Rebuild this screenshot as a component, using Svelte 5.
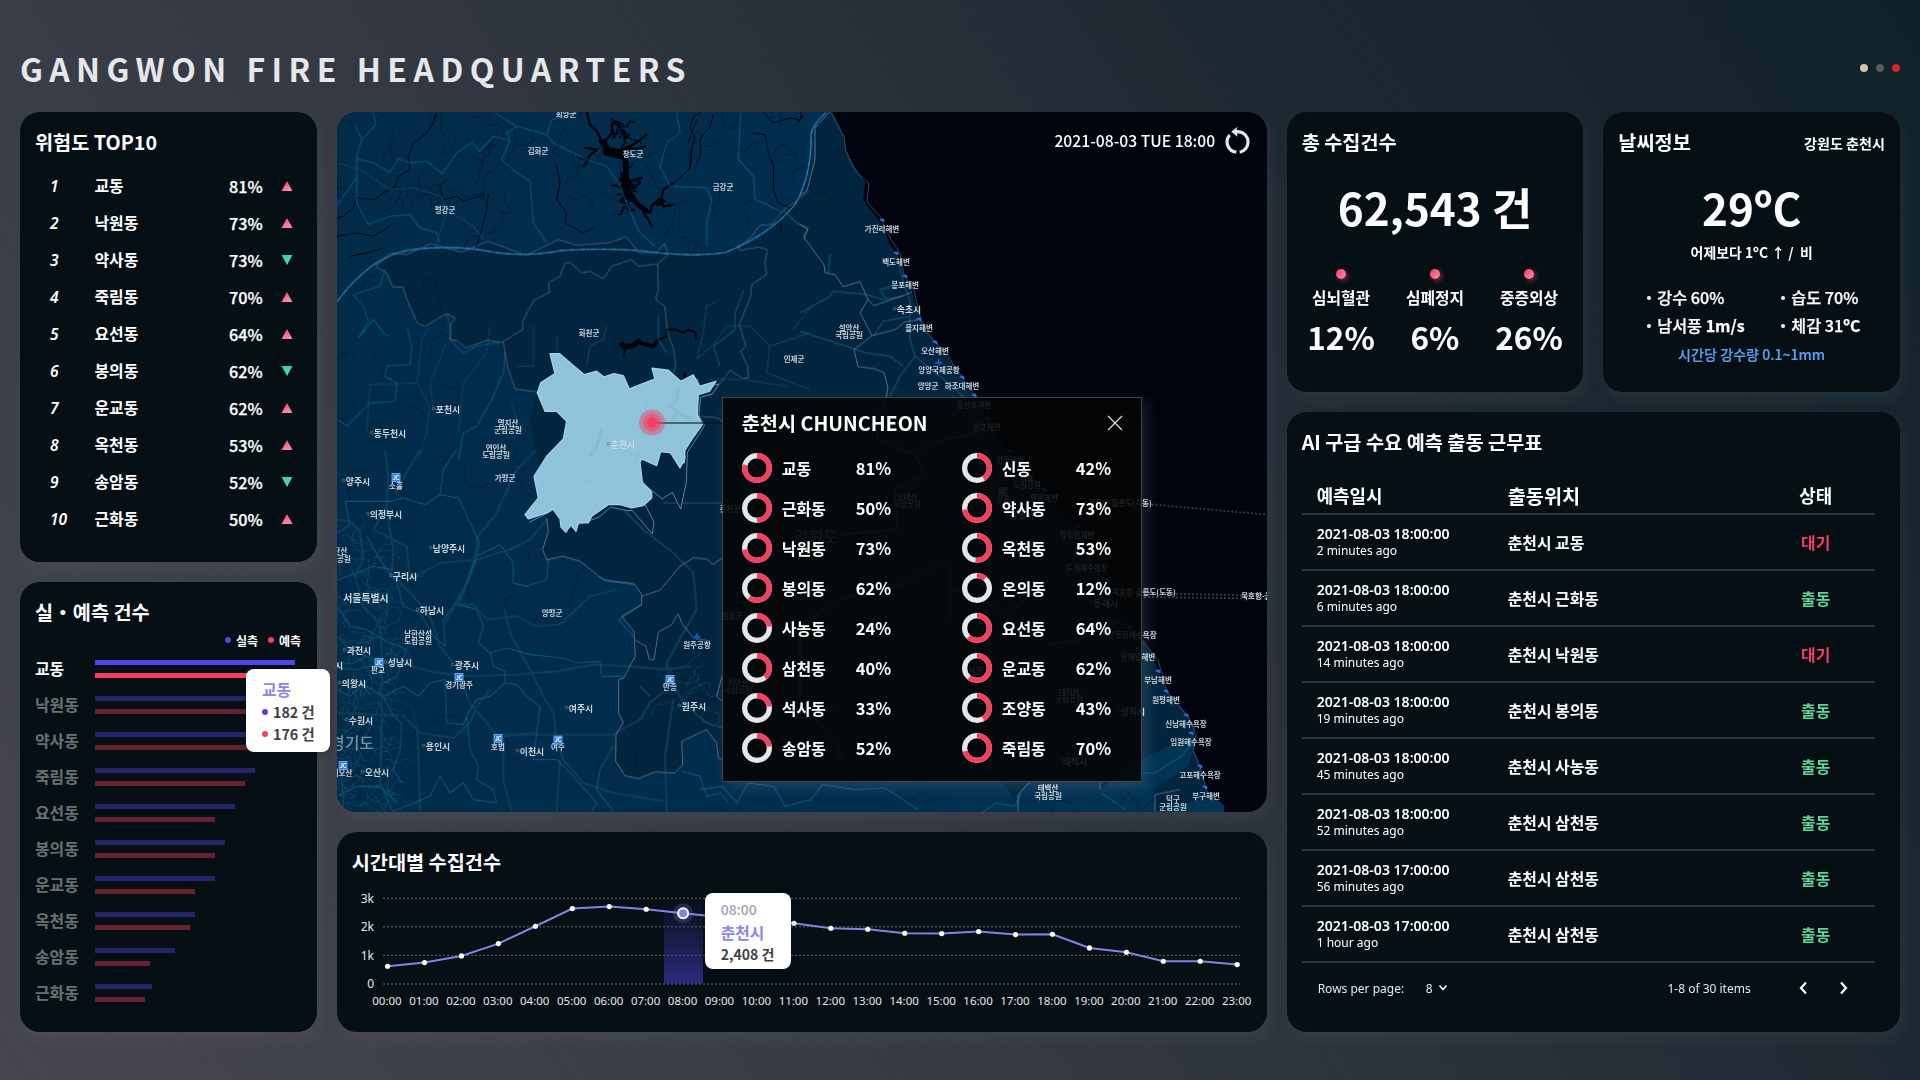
<script>
  const ranks = [
    ['교동', 81, 1], ['낙원동', 73, 1], ['약사동', 73, 0], ['죽림동', 70, 1], ['요선동', 64, 1],
    ['봉의동', 62, 0], ['운교동', 62, 1], ['옥천동', 53, 1], ['송암동', 52, 0], ['근화동', 50, 1]
  ];
  const bars = [
    ['교동', 200, 190], ['낙원동', 180, 170], ['약사동', 175, 160], ['죽림동', 160, 150], ['요선동', 140, 120],
    ['봉의동', 130, 120], ['운교동', 120, 100], ['옥천동', 100, 95], ['송암동', 80, 55], ['근화동', 57, 50]
  ];
  const donuts = [
    ['교동', 81, 79], ['신동', 42, 41], ['근화동', 50, 50], ['약사동', 73, 73], ['낙원동', 73, 73], ['옥천동', 53, 52],
    ['봉의동', 62, 61], ['온의동', 12, 11], ['사농동', 24, 23], ['요선동', 64, 62], ['삼천동', 40, 39], ['운교동', 62, 61],
    ['석사동', 33, 23], ['조양동', 43, 42], ['송암동', 52, 23], ['죽림동', 70, 71]
  ];
  const rows = [
    ['18', '2 minutes', '교동', 0], ['18', '6 minutes', '근화동', 1], ['18', '14 minutes', '낙원동', 0],
    ['18', '19 minutes', '봉의동', 1], ['18', '45 minutes', '사농동', 1], ['18', '52 minutes', '삼천동', 1],
    ['17', '56 minutes', '삼천동', 1], ['17', '1 hour', '삼천동', 1]
  ];
  const causes = [['심뇌혈관', 12], ['심폐정지', 6], ['중증외상', 26]];
  const hours = Array.from({ length: 24 }, (_, i) => String(i).padStart(2, '0') + ':00');
  const levels = [440, 429, 409, 372, 320, 267, 261, 269, 281, 292, 301, 311, 326, 329, 341, 342, 336, 345, 344, 385, 398, 425, 425, 435];
  const points = levels.map((v, i) => [50.6 + i * 36.94, v / 3 - 12.4]);
  const line = points.map((p) => p.join(',')).join(' ');

  // Small place names: [text, x, y]
  const places = [
    ['회양군', 566, 117], ['김화군', 538, 154], ['창도군', 633, 157], ['금강군', 723, 190], ['평강군', 445, 213],
    ['화천군', 589, 336], ['인제군', 794, 362], ['명지산', 508, 426], ['군립공원', 508, 433], ['연인산', 496, 451],
    ['도립공원', 496, 458], ['소흘', 396, 489], ['가평군', 505, 481], ['북한산', 337, 554], ['국립공원', 337, 562],
    ['양평군', 552, 616], ['남한산성', 418, 637], ['도립공원', 418, 644], ['판교', 378, 673], ['경기광주', 459, 688],
    ['호법', 498, 750], ['여주', 558, 750], ['서오산', 342, 776], ['원주공항', 697, 648], ['만종', 670, 690],
    ['가진리해변', 882, 232], ['백도해변', 896, 265], ['봉포해변', 905, 288], ['을지해변', 919, 331], ['설악산', 849, 331],
    ['국립공원', 849, 338], ['오산해변', 935, 354], ['양양국제공항', 939, 373], ['양양군', 928, 389], ['하조대해변', 962, 389],
    ['동산포해변', 974, 408], ['원포해변', 987, 430], ['연곡해변', 1010, 463], ['경포', 1027, 481], ['도립공원', 1027, 488],
    ['안목해변', 1044, 501], ['강릉', 1003, 502], ['정동진해변', 1077, 538], ['도직해수욕장', 1087, 571], ['오대산', 907, 500],
    ['국립공원', 907, 507], ['홍천군', 730, 512], ['횡성군', 732, 619], ['치악산', 738, 686], ['국립공원', 738, 693],
    ['정선군', 972, 674], ['대이리', 1069, 695], ['군립공원', 1069, 702], ['작은후진해수욕장', 1129, 638],
    ['한재밑해변', 1138, 660], ['부남해변', 1158, 683], ['원평해변', 1166, 703], ['신남해수욕장', 1186, 727],
    ['임원해수욕장', 1191, 745], ['고포해수욕장', 1200, 778], ['부구해변', 1206, 799], ['덕구', 1173, 802],
    ['군립공원', 1173, 810], ['태백산', 1048, 791], ['국립공원', 1048, 799],
    ['묵호항-울릉도(도동)', 1144, 595], ['묵호항-울릉도(도동)', 1273, 599], ['강릉항-울릉도(저동)', 1120, 506]
  ];
  const cities = [
    ['포천시', 448, 413], ['동두천시', 390, 437], ['춘천시', 623, 448], ['양주시', 358, 485], ['의정부시', 386, 518],
    ['남양주시', 449, 552], ['구리시', 405, 580], ['하남시', 432, 614], ['과천시', 359, 654], ['성남시', 400, 666],
    ['광주시', 467, 669], ['의왕시', 354, 687], ['여주시', 581, 712], ['수원시', 361, 724], ['용인시', 438, 750],
    ['이천시', 532, 755], ['오산시', 377, 776], ['원주시', 694, 710], ['속초시', 909, 313], ['강릉시', 1022, 519],
    ['동해시', 1106, 607], ['삼척시', 1133, 715], ['태백시', 1075, 765], ['안산시', 331, 669]
  ];
  const junctions = [[396, 478], [379, 663], [459, 678], [498, 739], [558, 740.5], [343, 766], [670, 680], [1003, 492]];
  const beaches = [
    [882, 221], [896, 254], [905, 277], [919, 320], [935, 343], [962, 378], [974, 396], [987, 419], [1010, 452],
    [1044, 490], [1077, 527], [1087, 561], [1107, 581], [1129, 627], [1138, 649], [1158, 672], [1166, 692],
    [1186, 716], [1191, 734], [1200, 767], [1205, 788]
  ];

  // Repeatable noise for minor streams and local roads
  let seed = 11;
  const rnd = () => ((seed = (seed * 16807) % 2147483647) / 2147483647);
  function wander(n, x0, y0, w, h, steps, len) {
    const out = [];
    for (let i = 0; i < n; i++) {
      let x = x0 + rnd() * w, y = y0 + rnd() * h, a = rnd() * 6.28;
      let d = `M${x.toFixed(1)} ${y.toFixed(1)}`;
      for (let k = 0; k < steps; k++) {
        a += (rnd() - 0.5) * 1.9;
        x += Math.cos(a) * len;
        y += Math.sin(a) * len;
        d += `L${x.toFixed(1)} ${y.toFixed(1)}`;
      }
      out.push(d);
    }
    return out.join('');
  }
  const streams = wander(60, 337, 112, 480, 150, 16, 2.4) + wander(14, 337, 260, 120, 150, 10, 3);
  const tracks = wander(50, 337, 400, 900, 410, 20, 5);
  const seoul = wander(130, 337, 540, 62, 270, 10, 3.5) + wander(12, 670, 675, 40, 40, 8, 4);
  const creeks = wander(44, 337, 460, 880, 350, 26, 3);
  const shore = wander(22, 616, 124, 18, 18, 4, 2.5) + wander(34, 622, 165, 11, 46, 4, 2.5);
</script>

<div class="page">
  <header>
    <h1>GANGWON FIRE HEADQUARTERS</h1>
    <div class="dots"><i class="sand"></i><i class="gray"></i><i class="crimson"></i></div>
  </header>

  <main>
    <div class="col left">
      <section class="card">
        <h2>위험도 TOP10</h2>
        <ol class="ranks">
          {#each ranks as [name, pct, up], i}
            <li>
              <em>{i + 1}</em><span>{name}</span><b>{pct}%</b>
              <svg width="12" height="10" viewBox="0 0 12 10">
                {#if up}<path d="M6 0 11.5 10H.5Z" fill="url(#rise)" />{:else}<path d="M.5 0h11L6 10Z" fill="url(#fall)" />{/if}
              </svg>
            </li>
          {/each}
        </ol>
      </section>

      <section class="card compare">
        <h2>실・예측 건수</h2>
        <div class="legend"><i class="blue"></i>실측<i class="red"></i>예측</div>
        {#each bars as [name, real, guess], i}
          <div class="barrow" class:dim={i > 0}>
            <span>{name}</span>
            <div class="pair">
              <div class="bar blue" style="width:{real}px"></div>
              <div class="bar red" style="width:{guess}px"></div>
            </div>
          </div>
        {/each}
        <div class="tip tip-bars">
          <strong>교동</strong>
          <p><i class="blue"></i>182 건</p>
          <p><i class="red"></i>176 건</p>
        </div>
      </section>
    </div>

    <div class="col middle">
      <section class="map">
        <svg class="terrain" viewBox="337 112.4 930 700" width="930" height="700">
          <defs>
            <linearGradient id="rise" x1="0" y1="0" x2="0.4" y2="1"><stop offset="0" stop-color="#f43f5e" /><stop offset="1" stop-color="#f989a8" /></linearGradient>
            <linearGradient id="fall" x1="0" y1="0" x2="0.6" y2="1"><stop offset="0" stop-color="#34d399" /><stop offset="1" stop-color="#4fdcab" /></linearGradient>
            <clipPath id="land">
              <path id="coast" d="M330 105H830L832 112 843 135 846 150 853 165 865 183 863 200 870 210 882 226 890 245 898 258 904 277 912 292 918 312 926 330 940 348 957 370 973 395 987 417 1005 450 1030 475 1050 500 1075 528 1090 560 1108 582 1112 602 1130 626 1150 652 1158 672 1167 692 1185 712 1195 728 1193 750 1200 765 1206 790 1224 806V820H330Z" />
            </clipPath>
            <linearGradient id="ground" x1="0" x2="1"><stop offset="0" stop-color="#012b49" /><stop offset=".6" stop-color="#012e4f" /><stop offset="1" stop-color="#013555" /></linearGradient>
          </defs>
          <rect x="330" y="105" width="945" height="715" fill="#01030f" />
          <g clip-path="url(#land)">
            <rect x="330" y="105" width="945" height="715" fill="url(#ground)" />
            <path fill="#01253f" d="M376 267 391 253 407 255 431 244 462 253 488 242 527 256 558 240 577 246 608 243 626 237 639 253 665 252 720 252 738 246 760 240 783 211 800 193 808 180 816 160 815 130 830 112 H1000 L1250 800 H1200 L1155 812 1153 790 1190 765 1195 735 1140 760 1100 790 1098 782 1030 782 1018 795 1015 802 1000 780 727 782 727 760 718 758 715 743 707 730 682 742 683 765 675 773 655 772 638 779 625 776 616 762 616 735 623 723 619 713 619 680 623 679 635 657 634 632 622 617 642 605 642 595 635 585 603 580 580 562 563 557 547 560 543 550 548 532 547 518 530 420 537 392 514 389 506 367 503 343 487 341 466 348 458 342 450 340 450 327 455 318 447 314 425 327 417 323 403 287 393 287 387 273Z" />
            <path d={streams} fill="none" stroke="#021525" stroke-width=".9" opacity=".65" />
            <path d={tracks} fill="none" stroke="#0b3246" stroke-width="1.2" opacity=".4" />
            <path d={creeks} fill="none" stroke="#021a2d" stroke-width=".8" opacity=".7" />
            <path d={seoul} fill="none" stroke="#146078" stroke-width="1" opacity=".4" />

            <!-- lakes and rivers -->
            <path d={shore} fill="none" stroke="#00030a" stroke-width="1.3" />
            <g transform="translate(330 100) scale(.33333)" fill="none" stroke="#00030a" stroke-linecap="round" stroke-linejoin="round">
              <path stroke-width="7" d="M770 36 780 75 800 95 815 125 832 150M760 200 775 180 750 175M775 172 800 150 765 145M838 150 825 125 848 100 845 72M860 155 900 140 925 125 950 105M910 150 945 140M880 170 890 230 880 260 848 258M940 340 955 360 965 380M930 315 960 340 965 320 985 300 1000 320 1030 315M990 310 1000 270 1030 250M895 245 935 235M900 270 930 250" />
              <path stroke-width="28" d="M832 155 875 165" /><path stroke-width="17" d="M815 125 840 155M885 170 888 220 890 260M872 160 900 145" />
              <path stroke-width="24" d="M885 240 888 275 905 295" /><path stroke-width="15" d="M905 295 930 320 950 335M880 300 890 285M985 312 998 305" />
              <path stroke-width="3" d="M1030 250 1060 225 1080 205 1085 150 1095 110 1080 85 1090 50 1110 40M1100 190 1112 170 1110 120 1140 80 1150 45M1300 40 1330 70 1380 55 1412 62 1412 38M1270 100 1305 105 1315 160 1330 200 1330 270 1345 310 1380 325M320 40 310 70 290 100 250 130 235 170 240 210 205 230 195 262 160 280 135 300 80 295 70 325 40 350 22 355M1100 60 1085 100 1075 130M680 200 690 250 680 300 710 340 705 370 760 400 790 385M475 285 470 330 455 390 440 440M340 300 380 290 400 305 465 285M340 300 330 260 350 240M22 410 80 400 130 410 180 380M60 470 110 460 160 445" />
              <path stroke-width="5" d="M1085 150 1080 205M1405 65 1418 50" />
              <path stroke-width="16" d="M876 735 885 742 910 738 925 725" /><path stroke-width="12" d="M935 732 970 740 985 720" /><path stroke-width="6" d="M925 730 940 735M985 720 1012 710 1008 690 1040 690 1060 700 1075 690 1095 698 1100 718M885 745 882 770M1065 820 1062 840" />
            </g>

            <!-- roads -->
            <g fill="none" stroke-linejoin="round" stroke="#0f4760" stroke-width="7" opacity=".65" transform="translate(330 450) scale(.33333)">
              <path d="M22 210 60 215 90 245 100 330 75 380 100 470 150 520 155 600 155 850 150 1000 190 1090M165 0 175 80 170 180 190 300 185 370 240 390 330 340 440 330 540 300 600 270 650 210M170 170 130 240 190 270 230 290 240 380M440 330 400 430 345 520M270 0 235 60 195 130M22 790 130 795 220 798 270 850 370 865 420 820 440 770 480 720M22 655 80 660 150 640 230 645 300 665 400 680 560 675 680 665 790 645 900 650 1010 660 1080 650M390 690 420 760 500 855 850 855 930 810 960 760 1010 720M525 480 540 550 610 680 640 740 670 790 680 870 700 930 760 1000 850 1030 1000 1055M520 860 520 990 545 1085M620 0 560 60 500 190 445 260 430 340 400 430 385 465 430 465 470 510 560 500 620 530 690 525 780 440 860 420M680 190 780 170 880 160M1000 160 1180 160M880 180 940 240 1030 310 1090 370 1100 480 1060 550 1010 640 1020 690 1060 760 1130 820 1180 835M930 710 960 740M180 370 250 440 300 500 330 590 370 640M520 860 620 850M35 960 40 1085M260 830 265 900 270 1085M690 930 680 1085M1030 750 1005 920 1010 1085" />
            </g>
            <g fill="none" stroke-linejoin="round" stroke="#11405a" stroke-width="6" opacity=".6" transform="translate(330 100) scale(.33333)">
              <path d="M25 190 90 210 180 270 250 265 335 290 350 330 430 380 460 420M350 340 320 430M300 680 275 720 262 850 120 855 110 1000M262 850 300 920 290 1000 265 1080M350 730 300 850 310 930M480 680 470 760 400 850 385 1000M540 900 560 960 590 1000M610 680 610 800 560 800M680 710 680 790M830 680 820 720 780 740 770 800M1160 605 1130 620 1120 700 1100 780 1150 735 1190 680 1260 680 1320 740 1440 700M1320 740 1310 820 1440 870M1130 840 1240 840 1370 860M1440 625 1390 690" />
            </g>
            <g fill="none" stroke-linejoin="round" stroke="#0f4a66" stroke-width="6" opacity=".75" transform="translate(800 100) scale(.33333)">
              <path d="M0 640 90 590 100 575 200 585 250 600 310 590M0 695 140 740 200 760 270 770 310 800M245 390 285 430 295 480 310 550 330 600 330 720 345 770 420 830 500 900M345 770 300 830 270 890M330 650 250 665 220 710M290 560 240 570 260 600M90 465 85 520" />
            </g>

            <!-- district outlines in cyan -->
            <g fill="none" stroke="#0f5c83" stroke-width="3.4" stroke-linejoin="round" opacity=".85">
              <g transform="translate(330 100) scale(.33333)">
                <path d="M75 75 95 120 80 170 80 235 22 315M130 40 137 75 95 120M80 178 130 190 180 217 205 178 240 190 290 185 337 222 380 160 425 128 448 155 490 110 540 122 515 180 560 220 600 245 610 370 650 430M540 122 530 100 560 80 495 40M560 80 650 105 665 60 740 40M650 105 670 130 720 155 770 180 830 200 865 250 890 310 915 370 930 400 975 440M80 235 80 310 115 375 180 350 240 345 270 385 320 400 330 430M1040 40 1050 100 1010 130 990 200 1020 260 1130 265 1145 300 1130 370 1130 440M1232 40 1225 180 1270 230 1275 300 1320 320 1360 340M165 510 150 560 70 585 100 620 115 665 85 715 130 660 160 700 175 710M232 685 245 740 240 795 170 800 165 830 200 850 195 905 120 910 50 980 22 960M525 760 520 820 485 900 440 980 400 1000 385 1080M350 645 365 690 360 720 400 760 440 740 510 728M1240 575 1215 640 1215 690 1150 740 1170 800M985 650 985 720 1010 760" />
              </g>
              <g transform="translate(330 450) scale(.33333)">
                <path d="M380 0 340 60 330 135 285 165 220 145 180 155 45 155 60 225 22 250M330 135 385 145 430 240 448 280 440 320 510 285 550 340 550 400 590 410 650 390 655 330M440 320 410 400 370 470 340 510 345 590 310 560 270 490 220 470 200 400M385 465 440 480 460 530 445 580 480 610 530 595 600 615 700 625 740 640 810 635 815 680 880 680M480 610 490 650 525 665 525 700 560 705 590 740 630 770 620 850 610 930 680 930 730 980 800 1060 785 1085M525 700 480 740 440 750 410 800 420 900 445 950 440 990 490 1020 500 1060 430 1050 400 1000 360 1030 330 980 300 1040 240 1065 190 1085M345 690 350 820 400 825 415 790M345 690 300 700 265 740 220 710 160 740 100 705 60 740 22 720M160 740 190 800 215 820 210 900 190 960 215 1000M22 470 60 530 110 540 160 570 230 600 200 680 160 700M22 560 60 600 110 620M850 890 810 960 800 1020 850 1085M935 465 865 510 910 560M660 330 650 330M805 380 830 395 915 400M1055 965 1110 980 1130 1040 1170 1030 1195 1060M22 640 70 640 110 620 150 650M22 390 80 370 130 350 190 360M22 1040 80 1010 150 1010 200 1060M110 260 150 330 200 400" />
              </g>
              <g transform="translate(700 380) scale(.37 .33333)">
                <path d="M0 1230 60 1220 100 1270 130 1210 200 1220 230 1280 300 1260 330 1215 420 1230 500 1225 590 1290M760 1300 800 1270 850 1280 870 1240M1085 1240 1150 1290M1340 1080 1300 1130 1230 1180 1160 1180" />
              </g>
            </g>

            <!-- provincial borders -->
            <g fill="none" stroke="#7d93a8" stroke-width="2.6" stroke-linejoin="round" opacity=".75">
              <g transform="translate(330 100) scale(.33333)">
                <path opacity=".8" d="M520 728 470 722 407 745 380 722 360 720 360 680 376 655 350 642 285 680 262 670 235 610 218 562 188 562 170 520 138 500 182 460 230 465 302 432 395 458 473 425 590 467 685 420 740 437 835 430 888 412 928 460 980 458 1003 432 1015 465 983 493 925 500 905 480 845 500 820 538 780 515 755 520 720 488 705 490 690 530 656 548 658 578 612 602 578 665 578 690 520 725 532 800 555 868 622 877M983 493 985 570 977 600 1005 620 1012 700 1030 745 1037 800 1030 820M1222 437 1230 452 1285 442 1312 450 1305 490 1310 525 1265 555 1262 590 1228 675 1248 740 1232 755 1253 800 1256 835 1235 835 1200 812 1145 885 1110 890M1230 440 1265 410 1290 377 1325 375 1360 332 1400 370 1435 385 1422 405 1425 420M1360 332 1438 275M1115 950 1165 955 1190 980" />
              </g>
              <path stroke-width=".9" d="M800 225 808 230 804 238 824 265 825 273 835 275 843 287 860 282 868 300 874 306 911 293 914 291M868 300 860 313 872 336 854 350 858 367 874 369 884 373 888 388 886 400 876 420 878 440M872 336 895 330 905 322 919 320M878 440 915 455 935 443 980 432 1000 430M915 455 925 475 895 490 897 530 840 535M840 600 900 585 950 560 950 620M950 590 975 595 1005 615 1050 580M1050 645 1080 640 1120 620M840 600 800 625 800 700 840 750 840 760M1100 790 1100 783M1018 812 1018 795 1030 782M1155 812 1155 795 1180 790M800 196 807 191 815 160 815 128 830 112" />
              <g transform="translate(330 450) scale(.33333)">
                <path d="M650 205 655 245 638 300 650 330 700 320 750 335 820 390 915 405 935 435 935 465 875 500 912 545 916 620 880 687 866 690 866 790 880 818 858 855 857 935 885 978 925 987 975 967 1035 970 1058 945 1055 875 1130 840 1160 880 1165 925 1180 930M935 440 990 422 1050 350 1090 325 1130 328 1150 345 1176 325M1176 680 1160 740 1176 755M916 572 948 590 958 630 972 630 985 548 1025 525 1045 492 1055 520 1090 565 1140 575" />
              </g>
            </g>

            <path fill="none" stroke="#1a6391" stroke-width="1.6" d="M337 302Q372 255 412 250Q455 245 490 252Q525 258 560 251Q600 248 640 251Q690 258 725 253Q770 235 795 205Q812 175 811 135Q812 125 826 113" />
            <path fill="none" stroke="#4ba6d6" stroke-width=".7" opacity=".8" stroke-dasharray="5 2 1.5 2" d="M337 302Q372 255 412 250Q455 245 490 252Q525 258 560 251Q600 248 640 251Q690 258 725 253Q770 235 795 205Q812 175 811 135Q812 125 826 113" />
          </g>

          <path d="M831 113 844 137 846 152 853 167 857 173 869 184 867 202 882 219 884 228 900 254 904 275 914 291 921 320 927 333 947 355 975 396 1000 430M1130 626 1158 660 1167 692 1190 720 1196 735 1193 750 1200 768 1207 792" fill="none" stroke="#6d7684" stroke-width=".8" opacity=".7" />
          <path d="M1052 496 1267 515M1112 593 1267 596M1112 597 1267 599" fill="none" stroke="#8f98a5" stroke-width="1" stroke-dasharray="2 2" opacity=".7" />

          <!-- highlighted district -->
          <g transform="translate(330 100) scale(.33333)">
            <path transform="translate(7 8)" fill="#01253f" stroke="#8fb0c5" stroke-width="2" stroke-linejoin="round" d="M895 870 972 838 965 805 1015 812 1055 845 1095 830 1105 860 1160 845 1140 875 1105 885 1100 940 1117 970 1085 1020 1065 1050 1062 1140 1045 1220 1020 1170 990 1190 940 1150 930 1190 965 1260 960 1295 900 1225 885 1225 835 1215 800 1245 700 1280M660 1225 590 1260" />
            <path fill="#8ec3da" stroke="#9fd4ea" stroke-width="4" stroke-linejoin="round" d="M660 762 688 762 762 825 800 815 822 832 852 822 880 828 898 868 975 838 966 806 1015 812 1052 845 1090 826 1108 860 1158 845 1138 875 1105 885 1102 945 1117 975 1085 1020 1065 1052 1062 1090 1065 1070 1064 1078 1050 1105 1022 1060 992 1056 980 1098 935 1078 930 1088 937 1148 965 1178 965 1195 940 1218 905 1225 870 1215 835 1215 785 1250 775 1270 745 1270 738 1295 722 1275 708 1298 693 1282 690 1258 668 1228 650 1240 595 1258 585 1245 625 1195 612 1130 650 1070 700 1018 710 965 680 935 645 935 622 880 632 850 675 822Z" />
            <path fill="none" stroke="#86b3bd" stroke-width="9" opacity=".5" d="M1045 870 1040 900 1020 920 1045 940 1025 960M1045 940 1085 960M815 990 800 1040 780 1070" />
            <path fill="none" stroke="#98cbd8" stroke-width="5" opacity=".6" d="M690 830 740 850 760 910 800 940 830 1000M880 870 930 900 950 960M700 1190 800 1150 900 1100 930 1020M760 1250 800 1180 860 1160" />
          </g>

          <g class="names">
            {#each places as [t, x, y]}<text {x} {y}>{t}</text>{/each}
          </g>
          <g class="names cities">
            {#each cities as [t, x, y]}
              <text {x} {y}>{t}</text>
              <circle cx={x - t.length * 3.8 - 3} cy={y - 4} r="1.4" />
            {/each}
            <text x="366" y="602.5" class="capital">서울특별시</text>
          </g>
          <text x="352" y="749" class="province">경기도</text>
          <text x="816" y="543" class="province">강원도</text>
          {#each junctions as [x, y]}
            <rect x={x - 4} y={y - 4} width="8" height="8" fill="#2b7fe8" stroke="#7fb4f2" stroke-width=".8" />
            <text {x} y={y + 2.2} class="jc">JC</text>
          {/each}
          {#each beaches as [x, y]}
            <path d="M{x - 2.5} {y}a2.5 2 0 0 1 5 0v1.5h-2v-1z" fill="#2f6be0" />
          {/each}
          <path d="M697 633.500v7M693.500 638l3.500-2 3.500 2M939 359.500v7M935.500 364l3.500-2 3.500 2" fill="none" stroke="#1d5fe0" stroke-width="1.3" />

          <path d="M652 423.400H723" stroke="#05090d" stroke-width="1" />
          <circle cx="652" cy="423" r="13" fill="#f43f5e" opacity=".45" />
          <circle cx="652" cy="423" r="9" fill="#f43f5e" opacity=".5" />
          <circle cx="652" cy="423" r="5" fill="#fb3b5c" />
        </svg>

        <div class="stamp">
          2021-08-03 TUE 18:00
          <svg width="26" height="30" viewBox="0 0 26 30" fill="none" stroke="#e5e7eb" stroke-width="3.2">
            <path d="M4.700 9A10.400 10.400 0 0 0 11.300 26.200M14.700 26.200A10.400 10.400 0 0 0 14 5.700" />
            <path d="M12.500 .8 6.300 5.800 12.500 10.800 12 7.600 15.500 7.200 13.500 3.900 11.500 3.800Z" fill="#e5e7eb" stroke="none" />
          </svg>
        </div>

        <div class="popup">
          <div class="pophead">
            <h3>춘천시 CHUNCHEON</h3>
            <svg width="16" height="16" viewBox="0 0 16 16" stroke="#e5e7eb" stroke-width="1.1"><path d="M1 1 15 15M15 1 1 15" /></svg>
          </div>
          <div class="donuts">
            {#each donuts as [name, pct, arc]}
              <div class="donut">
                <svg width="30" height="30" viewBox="0 0 30 30" fill="none" stroke-width="5.200">
                  <circle cx="15" cy="15" r="12.400" stroke="#e5e7eb" />
                  <circle cx="15" cy="15" r="12.400" stroke="#f43f5e" pathLength="100" stroke-dasharray="{arc} 100" transform="rotate(-90 15 15)" />
                </svg>
                <span>{name}</span><b>{pct}%</b>
              </div>
            {/each}
          </div>
        </div>
      </section>

      <section class="card trend">
        <h2>시간대별 수집건수</h2>
        <svg class="plot" viewBox="0 0 930 200" width="930" height="200">
          <defs><linearGradient id="band" x1="0" y1="0" x2="0" y2="1"><stop offset="0" stop-color="#4f46e5" stop-opacity="0" /><stop offset="1" stop-color="#4f46e5" stop-opacity=".5" /></linearGradient></defs>
          {#each ['3k', '2k', '1k', '0'] as t, i}
            <text x="37" y={70.500 + i * 28.600} text-anchor="end">{t}</text>
            <path d="M46 {66.200 + i * 28.600}H903" stroke="#5d6666" stroke-dasharray="2 2" />
          {/each}
          {#each hours as h, i}<text x={50 + i * 36.940} y="172.600" text-anchor="middle" class="hour">{h}</text>{/each}
          <rect x="327" y="66" width="39" height="85.500" fill="url(#band)" />
          <circle cx={points[8][0]} cy={points[8][1]} r="10" fill="#8b86ec" opacity=".22" />
          <polyline points={line} fill="none" stroke="#8880e6" stroke-width="2" />
          {#each points as [x, y], i}
            {#if i !== 8}<circle cx={x} cy={y} r="2.600" fill="#fff" />{/if}
          {/each}
          <circle cx={points[8][0]} cy={points[8][1]} r="5" fill="#8880e6" stroke="#fff" stroke-width="2" />
        </svg>
        <div class="tip tip-trend">
          <small>08:00</small>
          <strong>춘천시</strong>
          <p>2,408 건</p>
        </div>
      </section>
    </div>

    <div class="col right">
      <div class="two">
        <section class="card total">
          <h2>총 수집건수</h2>
          <div class="huge">62,543 건</div>
          <div class="causes">
            {#each causes as [name, pct]}
              <div><i></i><span>{name}</span><b>{pct}%</b></div>
            {/each}
          </div>
        </section>
        <section class="card weather">
          <div class="wtop"><h2>날씨정보</h2><span>강원도 춘천시</span></div>
          <div class="huge">29ºC</div>
          <p class="versus">어제보다 1ºC ↑ /&nbsp; 비</p>
          <div class="facts">
            <span>강수 <b>60%</b></span><span>습도 <b>70%</b></span>
            <span>남서풍 <b class="heavy">1m/s</b></span><span>체감 <b>31</b><b class="heavy">ºC</b></span>
          </div>
          <p class="rain">시간당 강수량 0.1~1mm</p>
        </section>
      </div>

      <section class="card roster">
        <h2>AI 구급 수요 예측 출동 근무표</h2>
        <div class="trow thead"><span>예측일시</span><span class="place">출동위치</span><span class="state">상태</span></div>
        {#each rows as [hour, ago, dong, out]}
          <div class="trow">
            <div class="when"><b>2021-08-03 {hour}:00:00</b><small>{ago} ago</small></div>
            <span class="place">춘천시 {dong}</span>
            <span class="state" class:go={out} class:wait={!out}>{out ? '출동' : '대기'}</span>
          </div>
        {/each}
        <footer>
          <span class="per">Rows per page:</span><span class="eight">8</span>
          <svg width="10" height="8" viewBox="0 0 10 8"><path d="M1.500 1.500 5 5.500 8.500 1.500" /></svg>
          <span class="count">1-8 of 30 items</span>
          <svg class="prev" width="10" height="14" viewBox="0 0 10 14"><path d="M8 1.500 3 7l5 5.500" /></svg>
          <svg class="next" width="10" height="14" viewBox="0 0 10 14"><path d="M2 1.500 7 7l-5 5.500" /></svg>
        </footer>
      </section>
    </div>
  </main>
</div>

<style>
  :global(body) { margin: 0; background: #2b313b; }
  .page {
    box-sizing: border-box; width: 1920px; height: 1080px; overflow: hidden; padding: 0 20px;
    font-family: 'Noto Sans CJK KR', 'Noto Sans', sans-serif; font-weight: 500; color: #fff;
    background: linear-gradient(56deg, #45454f 0%, #393d48 27%, #2e343e 50%, #262e38 62%, #1d2932 73%, #10212a 100%);
  }
  h1, h2, h3, p, ol { margin: 0; padding: 0; font-weight: 500; }
  header { display: flex; justify-content: space-between; align-items: center; box-sizing: border-box; height: 112.400px; padding-top: 23px; }
  h1 { font-size: 32px; line-height: 50px; letter-spacing: 6.440px; color: #e5e7eb; font-weight: 700; }
  .dots { display: flex; gap: 8px; }
  .dots i { width: 8px; height: 8px; border-radius: 50%; }
  .sand { background: #d8c3a5; } .gray { background: #5a5a5a; } .crimson { background: #d2232a; }
  main { display: grid; grid-template-columns: 296.670px 930px 613.330px; gap: 20px; height: 920px; }
  .col { display: grid; grid-template-columns: minmax(0, 1fr); gap: 20px; }
  .left { grid-template-rows: 450px 450px; }
  .middle { grid-template-rows: 700px 200px; }
  .right { grid-template-rows: 280px 620px; }
  .two { display: grid; grid-template-columns: repeat(2, minmax(0, 1fr)); gap: 20px; }
  .card { position: relative; box-sizing: border-box; background: #060f14; border-radius: 20px; padding: 15.600px 15px 15px; box-shadow: 4px 8px 16px rgba(255, 255, 255, .05); }
  h2 { font-size: 19.700px; line-height: 28px; font-weight: 700; }

  .ranks { list-style: none; padding-top: 11.400px; }
  .ranks li { display: flex; align-items: center; height: 37px; padding: 0 9px 0 15px; font-size: 15.900px; }
  .ranks em { width: 44.500px; font: italic 600 15.600px 'Noto Sans', sans-serif; }
  .ranks span { flex: 1; font-weight: 700; }
  .ranks b { font-weight: 500; font-size: 16.200px; margin-right: 18px; -webkit-text-stroke: .25px #fff; }

  .legend { display: flex; align-items: center; justify-content: flex-end; height: 18px; margin: 6px .500px 1px 0; font-size: 12px; font-weight: 700; }
  .legend i, .tip i { flex: none; width: 6px; height: 6px; border-radius: 50%; }
  .legend i { margin: -2px 5px 0 0; }
  .legend i.red { margin-left: 10px; }
  .blue { background: #4f46e5; } .red { background: #f43f5e; }
  .barrow { display: flex; align-items: center; height: 36px; font-size: 15.900px; font-weight: 700; }
  .barrow span { width: 60px; }
  .dim span { opacity: .4; } .dim .pair { opacity: .4; }
  .pair { display: grid; gap: 8px; }
  .bar { height: 5px; }
  .tip { position: absolute; box-sizing: border-box; background: #fff; border-radius: 8px; color: #3f3f46; font-size: 15px; line-height: 22px; white-space: nowrap; box-shadow: 0 3px 8px rgba(0, 0, 0, .2); }
  .tip strong { display: block; color: #8b86ec; font-weight: 700; font-size: 15.800px; }
  .tip p { display: flex; align-items: center; gap: 5px; font-weight: 700; font-size: 14.300px; }
  .tip-bars { left: 226px; top: 87px; width: 84px; height: 83px; padding: 9.500px 16px; }
  .tip-trend { left: 368px; top: 60.500px; width: 86px; height: 76px; padding: 7px 16px; }
  .tip-trend small { display: block; font-size: 14px; line-height: 18px; color: #9ca3af; font-weight: 500; }
  .tip-trend strong { line-height: 30px; }
  .tip-trend p { line-height: 12px; font-size: 14px; }

  .map { position: relative; border-radius: 20px; overflow: hidden; box-shadow: 4px 8px 16px rgba(255, 255, 255, .05); }
  .terrain { display: block; }
  .names text { font-size: 7.500px; font-weight: 700; fill: #c9d1d8; text-anchor: middle; }
  .names.cities text { font-size: 8.800px; fill: #cfd6dc; }
  .names.cities circle { fill: none; stroke: #5d7f93; stroke-width: .8; }
  .names.cities .capital { font-size: 9.900px; }
  .province { font-size: 16px; fill: #6f93aa; text-anchor: middle; }
  .jc { font-size: 5.500px; fill: #fff; text-anchor: middle; font-weight: 700; }
  .stamp { position: absolute; right: 15.500px; top: 14px; display: flex; align-items: center; gap: 10px; font-size: 15.700px; font-weight: 500; line-height: 30px; }
  .popup { position: absolute; left: 385px; top: 284.600px; box-sizing: border-box; width: 420px; height: 385px; padding: 11px 18px 12px 19px; border: 1px solid #454443; background: rgba(4, 6, 6, .88); box-shadow: 5px 5px 14px rgba(255, 255, 255, .12); }
  .pophead { display: flex; justify-content: space-between; align-items: center; height: 28px; }
  h3 { font-size: 19.700px; line-height: 28px; font-weight: 700; }
  .donuts { display: grid; grid-template-columns: 220px 180px; grid-auto-rows: 40px; padding-top: 11.500px; }
  .donut { display: flex; align-items: center; font-size: 16px; font-weight: 700; }
  .donut span { width: 74px; padding-left: 10px; }
  .donut b { font-weight: 700; font-size: 16.500px; }

  .plot { position: absolute; left: 0; top: 0; }
  .plot text { font: 400 12px 'Noto Sans', sans-serif; fill: #e5e7eb; }
  .plot .hour { font-size: 11.500px; }

  .huge { font-size: 44px; line-height: 60px; font-weight: 700; text-align: center; padding-top: 21.500px; }
  .causes { display: grid; grid-template-columns: 94px 94px 94px; justify-content: center; margin: 0 -8px; padding-top: 32px; }
  .causes div { display: flex; flex-direction: column; align-items: center; }
  .causes i { width: 10px; height: 10px; border-radius: 50%; background: linear-gradient(135deg, #f43f5e, #fb8fb0); box-shadow: 2px 2px 5px rgba(244, 63, 94, .5); }
  .causes span { font-size: 15.800px; line-height: 24px; padding-top: 6.500px; font-weight: 700; }
  .causes b { font-weight: 700; font-size: 31.500px; line-height: 44px; padding-top: 4px; }
  .wtop { display: flex; justify-content: space-between; height: 28px; }
  .wtop span { font-size: 14.100px; line-height: 31px; font-weight: 700; }
  .versus { font-size: 13.900px; line-height: 20px; text-align: center; padding-top: 4.500px; font-weight: 700; }
  .facts { display: grid; grid-template-columns: 134px 100px; grid-auto-rows: 28px; padding: 21.500px 0 0 29px; font-size: 16.200px; line-height: 28px; -webkit-text-stroke: .25px #fff; white-space: nowrap; }
  .facts span::before { content: ''; display: inline-block; width: 4px; height: 4px; border-radius: 50%; background: #fff; margin: 0 6px 4px 0; }
  .facts b { font-weight: 500; }
  .facts .heavy { font-weight: 700; font-size: 16px; }
  .rain { font-size: 14.100px; line-height: 20px; text-align: center; color: #5aa0f2; padding-top: 5px; -webkit-text-stroke: .2px #5aa0f2; }

  .roster { display: flex; flex-direction: column; }
  .trow { display: flex; align-items: center; box-sizing: border-box; width: 573px; height: 56px; padding-left: 15px; border-bottom: 2px solid #2e353c; font-size: 15.900px; font-weight: 700; }
  .thead { height: 59.400px; padding-top: 21px; font-size: 17.900px; }
  .thead span:first-child, .when { width: 191px; }
  .thead .place { font-size: 19.700px; }
  .place { width: 277px; }
  .state { width: 62px; text-align: center; }
  .go { color: #5bd79a; } .wait { color: #f43f5e; }
  .when { font-family: 'Noto Sans', sans-serif; line-height: 16px; padding-top: 1px; }
  .when b { display: block; font-size: 14.050px; font-weight: 600; }
  .when small { display: block; font-size: 12px; font-weight: 400; line-height: 17px; }
  footer { display: flex; align-items: center; width: 573px; height: 50px; padding-left: 16px; font: 400 12px 'Noto Sans', sans-serif; color: #e5e7eb; box-sizing: border-box; }
  footer svg { fill: none; stroke: #fff; stroke-width: 1.500; margin-left: 5px; }
  .per { width: 108px; }
  .count { margin-left: auto; }
  footer .prev { margin-left: 47px; stroke-width: 2.200; }
  footer .next { margin: 0 25.500px 0 31.500px; stroke-width: 2.200; }
</style>
